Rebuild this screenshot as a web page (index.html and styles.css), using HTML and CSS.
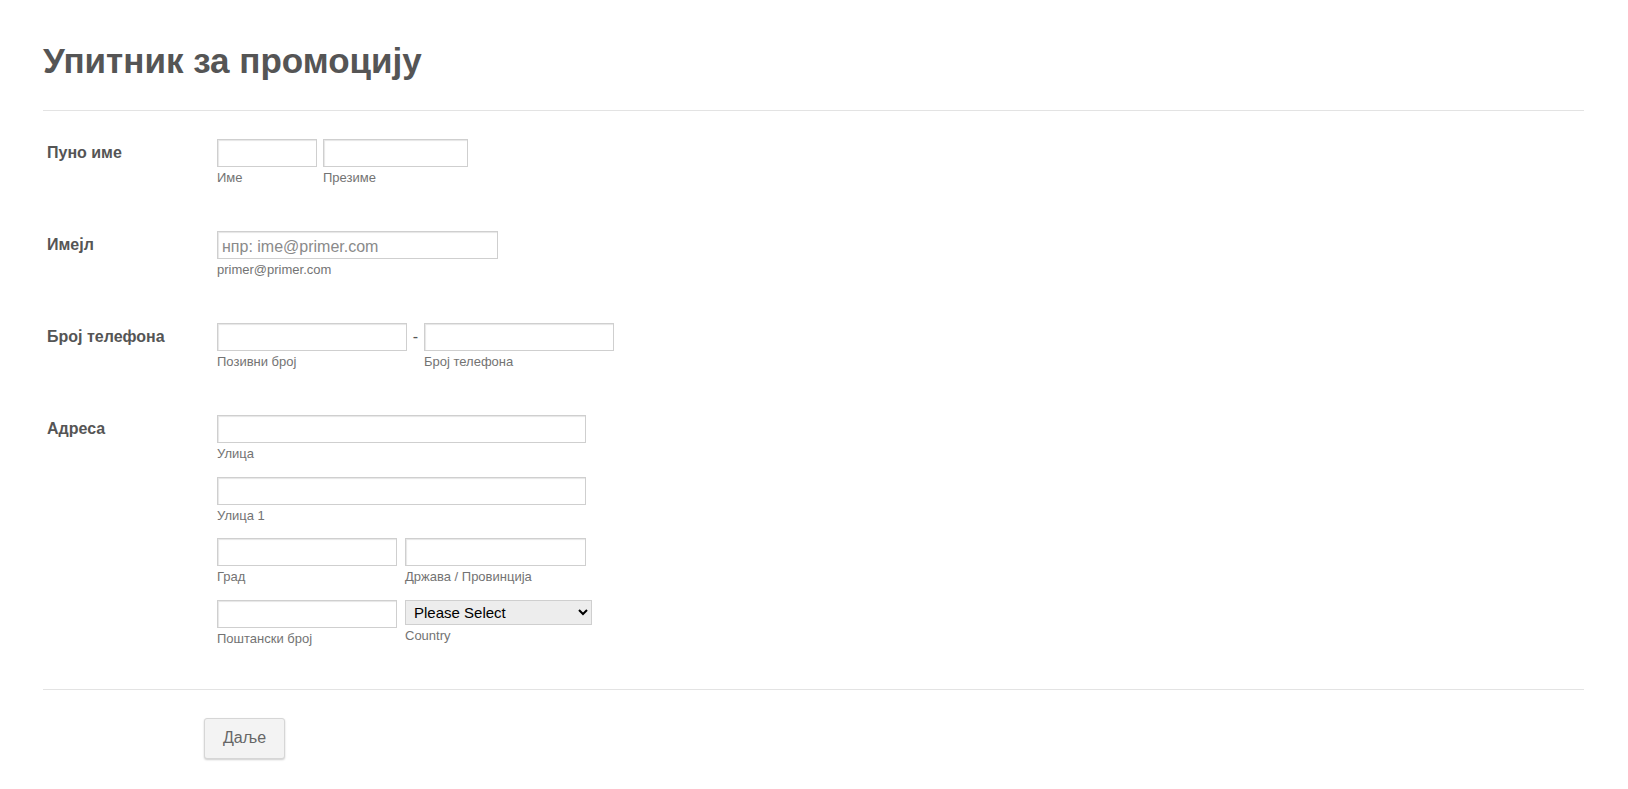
FILE: index.html
```html
<!DOCTYPE html>
<html>
<head>
    <title>Упитник за промоцију</title>
    <link rel="stylesheet" href="styles.css">
</head>
<body>
    <form class="form">
        <div class="form-header">
            <h1>Упитник за промоцију</h1>
        </div>
        <ul class="form-lines">
            <li class="form-line">
                <label class="form-label">Пуно име</label>
                <div class="form-inputs">
                    <div class="sub-row">
                        <span class="field w-first">
                            <input type="text" id="first-name">
                            <label class="sublabel" for="first-name">Име</label>
                        </span>
                        <span class="field w-last">
                            <input type="text" id="last-name">
                            <label class="sublabel" for="last-name">Презиме</label>
                        </span>
                    </div>
                </div>
            </li>
            <li class="form-line">
                <label class="form-label">Имејл</label>
                <div class="form-inputs">
                    <span class="field w-email">
                        <input type="email" id="email" placeholder="нпр: ime@primer.com">
                        <label class="sublabel" for="email">primer@primer.com</label>
                    </span>
                </div>
            </li>
            <li class="form-line">
                <label class="form-label">Број телефона</label>
                <div class="form-inputs">
                    <div class="sub-row phone-row">
                        <span class="field w-phone">
                            <input type="tel" id="area">
                            <label class="sublabel" for="area">Позивни број</label>
                        </span>
                        <span class="dash">-</span>
                        <span class="field w-phone">
                            <input type="tel" id="phone">
                            <label class="sublabel" for="phone">Број телефона</label>
                        </span>
                    </div>
                </div>
            </li>
            <li class="form-line last-line">
                <label class="form-label">Адреса</label>
                <div class="form-inputs address">
                    <span class="field w-street">
                        <input type="text" id="street">
                        <label class="sublabel" for="street">Улица</label>
                    </span>
                    <span class="field w-street">
                        <input type="text" id="street2">
                        <label class="sublabel" for="street2">Улица 1</label>
                    </span>
                    <div class="sub-row">
                        <span class="field w-half">
                            <input type="text" id="city">
                            <label class="sublabel" for="city">Град</label>
                        </span>
                        <span class="field w-half2">
                            <input type="text" id="state">
                            <label class="sublabel" for="state">Држава / Провинција</label>
                        </span>
                    </div>
                    <div class="sub-row">
                        <span class="field w-half">
                            <input type="text" id="zip">
                            <label class="sublabel" for="zip">Поштански број</label>
                        </span>
                        <span class="field w-country">
                            <select id="country">
                                <option>Please Select</option>
                                <option>Serbia</option>
                                <option>Montenegro</option>
                            </select>
                            <label class="sublabel" for="country">Country</label>
                        </span>
                    </div>
                </div>
            </li>
        </ul>
        <div class="form-buttons">
            <button type="button" class="next-btn">Даље</button>
        </div>
    </form>
</body>
</html>
```

FILE: styles.css
```css
body {
    margin: 0;
    background-color: #fff;
    font-family: "Liberation Sans", Arial, sans-serif;
    color: #555;
}

.form {
    padding: 0 44px 0 43px;
}

.form-header {
    padding: 39px 0 28px;
    border-bottom: 1px solid #e3e3e3;
}

h1 {
    margin: 0;
    font-size: 35px;
    line-height: 43px;
    font-weight: bold;
    color: #555;
}

.form-lines {
    list-style: none;
    margin: 0;
    padding: 0;
}

.form-line {
    display: flex;
    padding: 28px 0 18px 4px;
}

.last-line {
    padding-bottom: 43px;
}

.form-label {
    width: 170px;
    flex: 0 0 170px;
    padding-top: 5px;
    font-size: 16px;
    line-height: 18px;
    font-weight: bold;
    color: #555;
}

.form-inputs {
    display: flex;
    flex-direction: column;
}

.address {
    gap: 15.5px;
}

.sub-row {
    display: flex;
    gap: 6px;
}

.address .sub-row {
    gap: 8px;
}

.phone-row {
    gap: 0;
}

.dash {
    width: 17px;
    text-align: center;
    font-size: 16px;
    line-height: 28px;
    color: #555;
}

.field {
    display: flex;
    flex-direction: column;
}

.w-first { width: 100px; }
.w-last { width: 145px; }
.w-email { width: 281px; }
.w-phone { width: 190px; }
.w-street { width: 369px; }
.w-half { width: 180px; }
.w-half2 { width: 181px; }
.w-country { width: 187px; }

input {
    box-sizing: border-box;
    width: 100%;
    height: 28px;
    margin: 0;
    padding: 3px 4px 0;
    border: 1px solid #cfcfcf;
    box-shadow: inset 1px 1px 1px #e6e6e6;
    font-family: "Liberation Sans", Arial, sans-serif;
    font-size: 16px;
    color: #333;
    background: #fff;
}

input::placeholder {
    color: #8a8a8a;
}

select {
    box-sizing: border-box;
    width: 100%;
    height: 25px;
    margin: 0;
    padding: 1px 2px 0 4px;
    border: 1px solid #cfcfcf;
    background-color: #ededed;
    font-family: "Liberation Sans", Arial, sans-serif;
    font-size: 15px;
    color: #000;
}

.sublabel {
    display: block;
    margin-top: 3px;
    font-size: 13px;
    line-height: 15px;
    color: #737373;
    white-space: nowrap;
}

.form-buttons {
    border-top: 1px solid #e3e3e3;
    padding: 28px 0 28px 161px;
}

.next-btn {
    width: 81px;
    height: 41px;
    border: 1px solid #d6d6d6;
    border-radius: 3px;
    background-color: #f3f3f3;
    box-shadow: 0 1px 2px rgba(0, 0, 0, 0.2);
    font-family: "Liberation Sans", Arial, sans-serif;
    font-size: 16px;
    color: #666;
    cursor: pointer;
}
```
